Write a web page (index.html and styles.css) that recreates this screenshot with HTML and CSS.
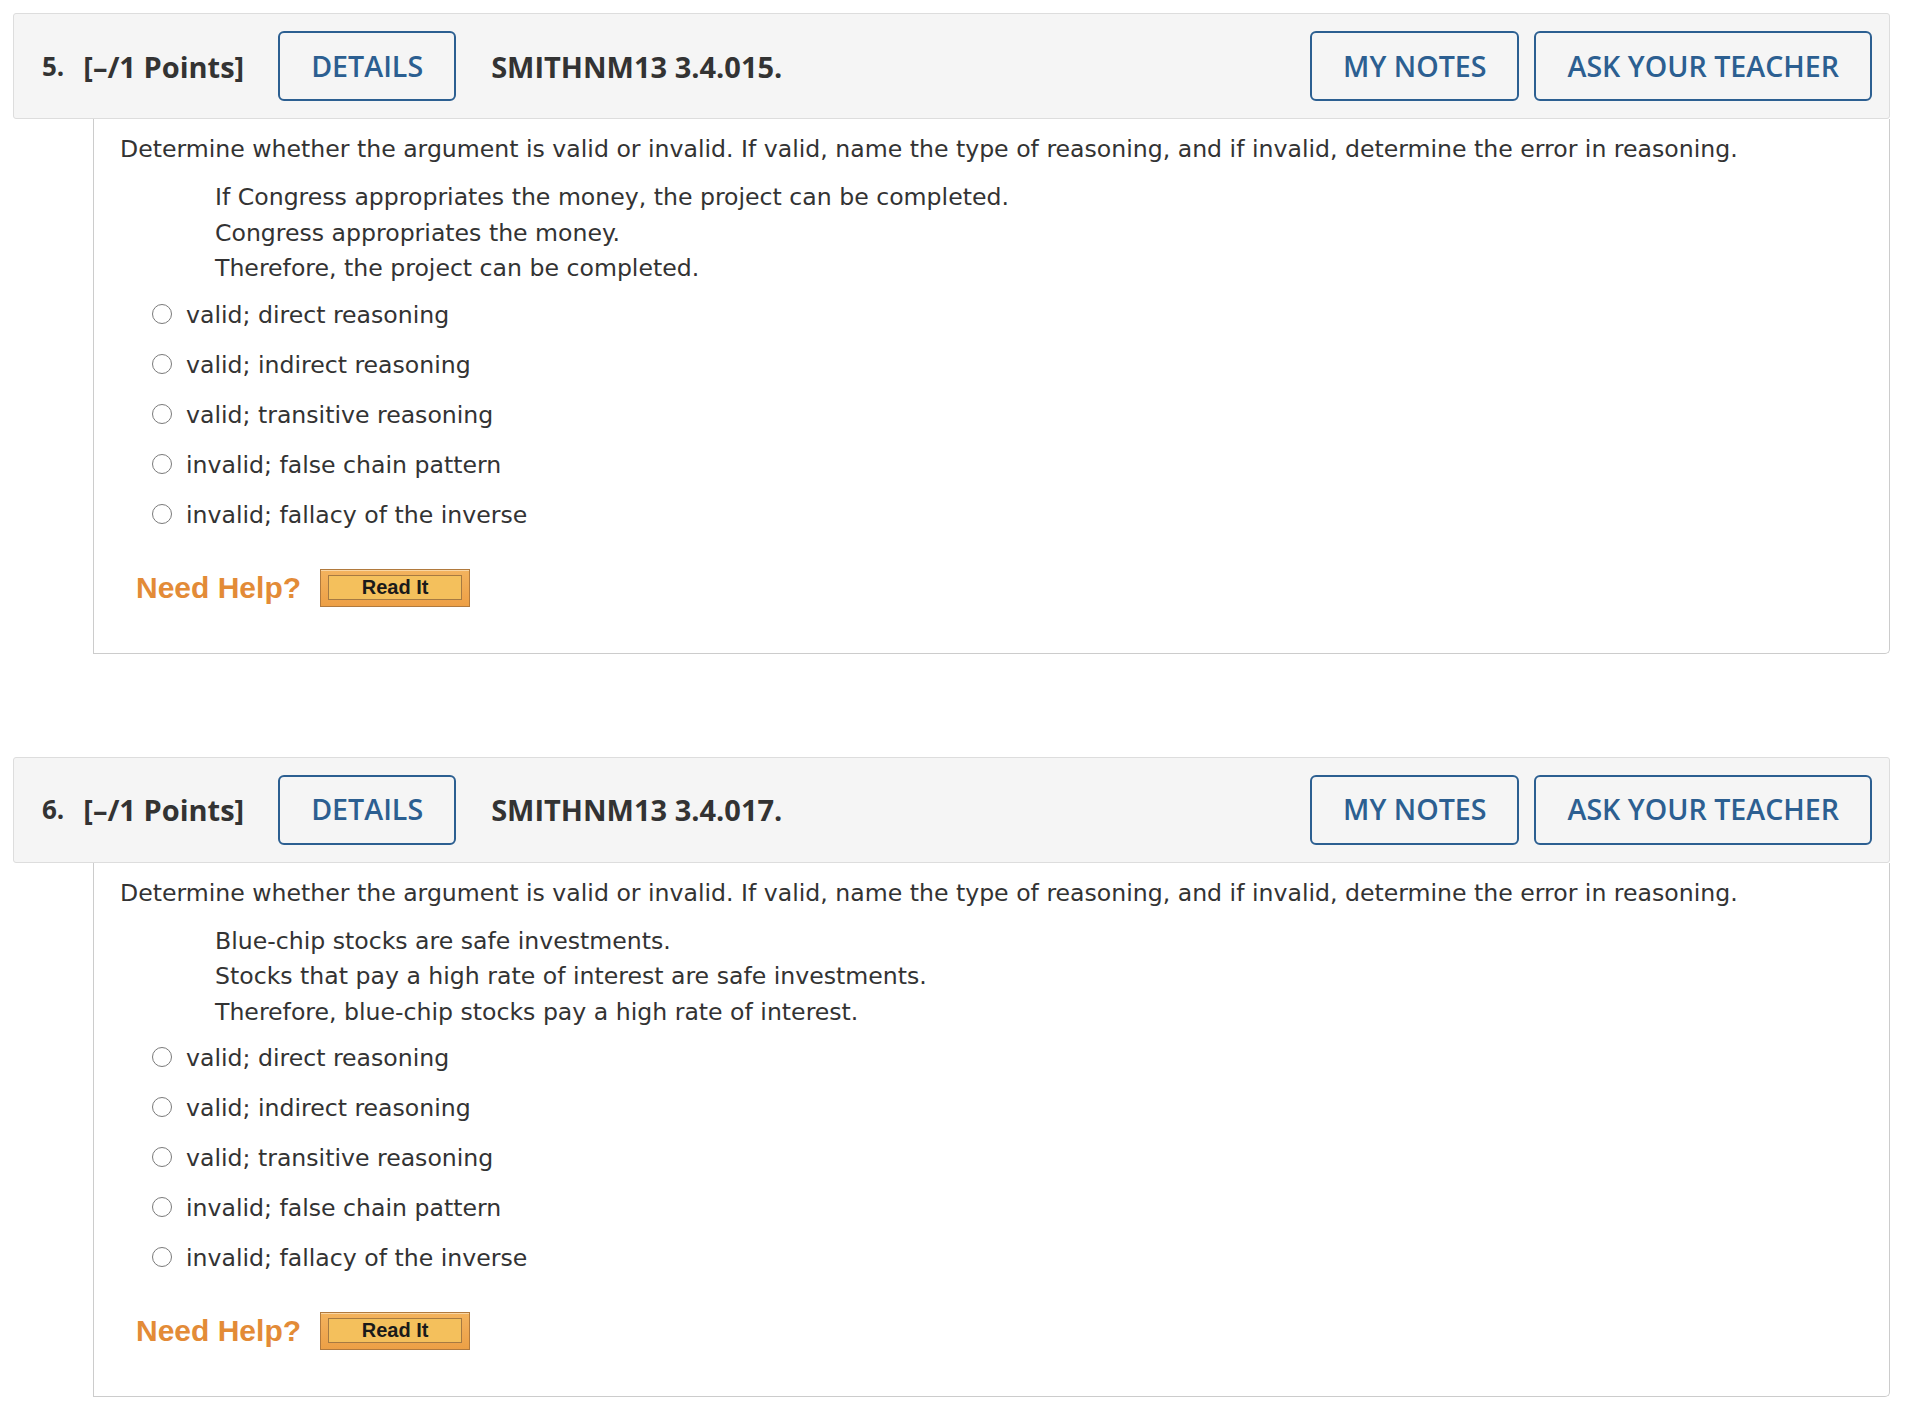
FILE: index.html
```html
<!DOCTYPE html>
<html lang="en">
<head>
<meta charset="utf-8">
<title>Questions</title>
<link rel="stylesheet" href="styles.css">
</head>
<body>
<div class="page">

  <section class="question">
    <header class="qhead">
      <span class="qnum">5.</span>
      <span class="qpts">[–/1 Points]</span>
      <button class="btn btn-details">DETAILS</button>
      <span class="qid">SMITHNM13 3.4.015.</span>
      <button class="btn btn-notes">MY NOTES</button>
      <button class="btn btn-ask">ASK YOUR TEACHER</button>
    </header>
    <div class="qbody">
      <p class="prompt">Determine whether the argument is valid or invalid. If valid, name the type of reasoning, and if invalid, determine the error in reasoning.</p>
      <div class="argument">
        <div>If Congress appropriates the money, the project can be completed.</div>
        <div>Congress appropriates the money.</div>
        <div>Therefore, the project can be completed.</div>
      </div>
      <ul class="options">
        <li><span class="radio"></span><span>valid; direct reasoning</span></li>
        <li><span class="radio"></span><span>valid; indirect reasoning</span></li>
        <li><span class="radio"></span><span>valid; transitive reasoning</span></li>
        <li><span class="radio"></span><span>invalid; false chain pattern</span></li>
        <li><span class="radio"></span><span>invalid; fallacy of the inverse</span></li>
      </ul>
      <div class="help">
        <span class="help-label">Need Help?</span>
        <span class="readit"><span class="readit-inner">Read It</span></span>
      </div>
    </div>
  </section>

  <section class="question">
    <header class="qhead">
      <span class="qnum">6.</span>
      <span class="qpts">[–/1 Points]</span>
      <button class="btn btn-details">DETAILS</button>
      <span class="qid">SMITHNM13 3.4.017.</span>
      <button class="btn btn-notes">MY NOTES</button>
      <button class="btn btn-ask">ASK YOUR TEACHER</button>
    </header>
    <div class="qbody">
      <p class="prompt">Determine whether the argument is valid or invalid. If valid, name the type of reasoning, and if invalid, determine the error in reasoning.</p>
      <div class="argument">
        <div>Blue-chip stocks are safe investments.</div>
        <div>Stocks that pay a high rate of interest are safe investments.</div>
        <div>Therefore, blue-chip stocks pay a high rate of interest.</div>
      </div>
      <ul class="options">
        <li><span class="radio"></span><span>valid; direct reasoning</span></li>
        <li><span class="radio"></span><span>valid; indirect reasoning</span></li>
        <li><span class="radio"></span><span>valid; transitive reasoning</span></li>
        <li><span class="radio"></span><span>invalid; false chain pattern</span></li>
        <li><span class="radio"></span><span>invalid; fallacy of the inverse</span></li>
      </ul>
      <div class="help">
        <span class="help-label">Need Help?</span>
        <span class="readit"><span class="readit-inner">Read It</span></span>
      </div>
    </div>
  </section>

</div>
</body>
</html>
```
FILE: styles.css
```css
* {
  box-sizing: border-box;
}

html, body {
  margin: 0;
  padding: 0;
  background: #ffffff;
}

body {
  font-family: "DejaVu Sans", Verdana, sans-serif;
  color: #333333;
}

.page {
  padding: 13px 30px 0 13px;
}

.question {
  margin-bottom: 103px;
}

.question:last-child {
  margin-bottom: 0;
}

.qhead {
  display: flex;
  align-items: center;
  height: 106px;
  padding: 0 17px 0 28px;
  background: #f5f5f5;
  border: 1px solid #dddddd;
  border-radius: 3px;
  font-family: "Open Sans", sans-serif;
  color: #333333;
}

.qnum {
  font-size: 26px;
  font-weight: 700;
  margin-top: -1px;
}

.qpts {
  font-size: 29px;
  font-weight: 700;
  margin-left: 19px;
}

.qid {
  font-size: 29px;
  font-weight: 700;
  margin-left: 35px;
}

.btn {
  height: 70px;
  padding: 0 31px;
  border: 2px solid #2c5f91;
  border-radius: 6px;
  background: transparent;
  color: #2c5f91;
  font-family: "Open Sans", sans-serif;
  font-size: 28.6px;
  font-weight: 600;
  line-height: 1;
}

.btn-details {
  margin-left: 34px;
}

.btn-notes {
  margin-left: auto;
}

.btn-ask {
  margin-left: 15px;
}

.qbody {
  margin-left: 80px;
  border: 1px solid #cccccc;
  border-top: none;
  border-bottom-right-radius: 5px;
  padding: 15px 0 46px 26px;
  font-size: 23.6px;
}

.prompt {
  margin: 0;
  line-height: 30px;
}

.argument {
  margin-top: 16px;
  padding-left: 95px;
  line-height: 35.5px;
}

.options {
  list-style: none;
  margin: 3px 0 0 0;
  padding: 0 0 0 32px;
}

.options li {
  display: flex;
  align-items: center;
  height: 50px;
}

.radio {
  flex: none;
  width: 20px;
  height: 20px;
  border: 1.5px solid #7a7a7a;
  border-radius: 50%;
  background: #ffffff;
  margin-right: 14px;
  position: relative;
  top: -1px;
}

.help {
  display: flex;
  align-items: center;
  margin-top: 29px;
  padding-left: 16px;
  height: 38px;
}

.help-label {
  font-family: "Liberation Sans", Arial, sans-serif;
  font-weight: 700;
  font-size: 30px;
  color: #e38b37;
  line-height: 38px;
}

.readit {
  display: flex;
  margin-left: 19px;
  width: 150px;
  height: 38px;
  padding: 5px 7px 6px 7px;
  background: linear-gradient(#f3b35e, #eda046);
  border: 1px solid #b17a3e;
  box-shadow: inset 0 1px 0 #f9d6a4;
}

.readit-inner {
  flex: 1;
  display: flex;
  align-items: center;
  justify-content: center;
  background: #f4c05c;
  border: 1px solid #a67a42;
  font-family: "Liberation Sans", Arial, sans-serif;
  font-weight: 700;
  font-size: 20px;
  color: #1a1a1a;
}
```
